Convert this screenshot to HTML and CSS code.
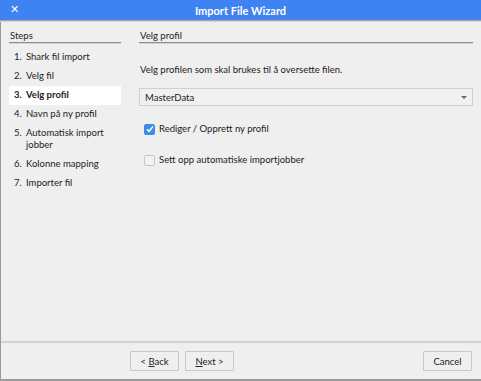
FILE: index.html
```html
<!DOCTYPE html>
<html>
<head>
    <meta charset="UTF-8"/>
    <title>Import File Wizard</title>
    <link rel="stylesheet" href="styles.css">
</head>
<body>
<div class="window">
    <div class="titlebar">
        <span class="close">&#x2715;</span>
        <span class="title">Import File Wizard</span>
    </div>
    <div class="main">
        <div class="steps">
            <div class="heading">Steps</div>
            <ol class="step-list">
                <li><span class="num">1.</span><span>Shark fil import</span></li>
                <li><span class="num">2.</span><span>Velg fil</span></li>
                <li class="active"><span class="num">3.</span><span>Velg profil</span></li>
                <li><span class="num">4.</span><span>Navn på ny profil</span></li>
                <li class="tall"><span class="num">5.</span><span>Automatisk import jobber</span></li>
                <li><span class="num">6.</span><span>Kolonne mapping</span></li>
                <li><span class="num">7.</span><span>Importer fil</span></li>
            </ol>
        </div>
        <div class="content">
            <div class="heading">Velg profil</div>
            <p class="intro">Velg profilen som skal brukes til å oversette filen.</p>
            <div class="select">
                <span>MasterData</span>
                <span class="arrow"></span>
            </div>
            <label class="check"><span class="box checked"><svg width="8" height="8" viewBox="0 0 8 8"><path d="M1 4.2 L3.1 6.3 L7 1.4" fill="none" stroke="#fff" stroke-width="1.5"/></svg></span>Rediger / Opprett ny profil</label>
            <label class="check"><span class="box"></span>Sett opp automatiske importjobber</label>
        </div>
    </div>
    <div class="footer">
        <button class="btn">&lt; <u>B</u>ack</button>
        <button class="btn"><u>N</u>ext &gt;</button>
        <span class="spacer"></span>
        <button class="btn">Cancel</button>
    </div>
</div>
</body>
</html>
```

FILE: styles.css
```css
html, body {
    margin: 0;
    padding: 0;
    background: #efefef;
}

body {
    font-family: Lato, "Noto Sans", sans-serif;
    font-size: 9.5px;
    color: #222;
}

.window {
    width: 481px;
    height: 381px;
    box-sizing: border-box;
    border-left: 1px solid #9a9a9a;
    border-bottom: 2px solid #9a9a9a;
    display: flex;
    flex-direction: column;
}

.titlebar {
    height: 20px;
    background: #3f82f1;
    color: white;
    position: relative;
    display: flex;
    align-items: center;
    justify-content: center;
    border-bottom: 1px solid #a8a8a8;
    box-shadow: 0 1px 0 #d6d6d6;
    margin-left: -1px;
}

.close {
    position: absolute;
    left: 10px;
    top: 3px;
    font-size: 11px;
    font-weight: bold;
    font-family: "DejaVu Sans", sans-serif;
}

.title {
    font-size: 11px;
    font-weight: bold;
}

.main {
    flex: 1;
    display: flex;
    padding: 9px 8px 0 8px;
}

.heading {
    height: 12px;
    line-height: 12px;
    padding-left: 1px;
    border-bottom: 1px solid #8c8c8c;
    box-shadow: 0 1px 0 #d4d4d4;
}

.steps {
    width: 112px;
}

.step-list {
    list-style: none;
    margin: 5px 0 0 0;
    padding: 0;
}

.step-list li {
    display: flex;
    padding: 3px 0 4px 5px;
    min-height: 12px;
    line-height: 12px;
}

.step-list li .num {
    width: 12px;
    flex-shrink: 0;
}

.step-list li.active {
    background: #fff;
    font-weight: bold;
}

.content {
    flex: 1;
    margin-left: 18px;
}

.intro {
    margin: 21px 0 12px 1px;
    line-height: 12px;
}

.select {
    height: 16px;
    border: 1px solid #cfcfcf;
    background: #f0f0f0;
    display: flex;
    align-items: center;
    padding: 0 5px;
    justify-content: space-between;
}

.arrow {
    width: 0;
    height: 0;
    border-left: 3px solid transparent;
    border-right: 3px solid transparent;
    border-top: 3px solid #666;
}

.check {
    display: flex;
    align-items: center;
    margin-left: 5px;
    line-height: 12px;
}

.check:first-of-type {
    margin-top: 17px;
}

.check + .check {
    margin-top: 19px;
}

.box {
    width: 9px;
    height: 9px;
    border: 1px solid #c6c6c6;
    border-radius: 2px;
    background: #f2f2f2;
    margin-right: 4px;
    display: flex;
    align-items: center;
    justify-content: center;
}

.box.checked {
    background: #3a8ee6;
    border-color: #3a8ee6;
}

.footer {
    height: 38px;
    border-top: 2px solid #d2d2d2;
    display: flex;
    align-items: center;
    padding: 0 9px 0 129px;
    gap: 6px;
    box-sizing: border-box;
}

.spacer {
    flex: 1;
}

.btn {
    width: 49px;
    height: 20px;
    font-family: inherit;
    font-size: 9.5px;
    color: #222;
    background: #efefef;
    border: 1px solid #c8c8c8;
    border-radius: 1px;
    padding: 0;
}
```
